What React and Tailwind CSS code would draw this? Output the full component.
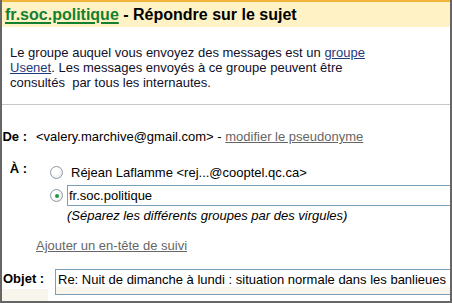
import React from 'react';

function Radio({ checked }) {
  return (
    <span className="w-[13px] h-[13px] shrink-0 rounded-full border border-[#8d99a4] bg-[radial-gradient(circle_at_35%_35%,#ffffff_30%,#dfe3e6_100%)] flex items-center justify-center">
      {checked && <span className="w-[4px] h-[4px] rounded-full bg-[#1f9a3a]" />}
    </span>
  );
}

export default function App() {
  return (
    <div className="w-[452px] h-[303px] overflow-hidden bg-white border-l-2 border-r-2 border-b-2 border-[#666] flex flex-col font-['Liberation_Sans',Arial,sans-serif] text-[13px] text-black">
      {/* Title bar */}
      <div className="h-[27px] shrink-0 border-t-2 border-[#f2b63c] bg-[#fff3c6] pl-[3px] flex items-center">
        <h1 className="text-[16px] font-bold leading-[18px] whitespace-nowrap">
          <a href="#" className="text-[#138030] underline decoration-2 underline-offset-2">fr.soc.politique</a>
          {' - Répondre sur le sujet'}
        </h1>
      </div>

      {/* Notice */}
      <p className="mt-[18px] pl-[8px] w-[380px] leading-[15px] text-[#10102a]">
        Le groupe auquel vous envoyez des messages est un{' '}
        <a href="#" className="text-[#1d3a7c] underline">groupe Usenet</a>. Les messages envoyés à ce groupe peuvent être
        consultés{'\u00a0'} par tous les internautes.
      </p>

      <div className="mt-[14px] h-px shrink-0 bg-[#c8c8c8]" />

      {/* From */}
      <div className="mt-[24px] flex leading-[16px] whitespace-nowrap">
        <span className="w-[25px] text-right font-bold shrink-0">De :</span>
        <span className="ml-[9px]">
          {'<valery.marchive@gmail.com> - '}
          <a href="#" className="text-[#666] underline">modifier le pseudonyme</a>
        </span>
      </div>

      {/* To */}
      <div className="mt-[16px] flex whitespace-nowrap">
        <span className="w-[25px] text-right font-bold leading-[15px] shrink-0">À :</span>
        <div className="ml-[23px] pt-[4px] flex flex-col">
          <label className="flex items-center h-[15px]">
            <Radio />
            <span className="ml-[8px] leading-[15px]">Réjean Laflamme &lt;rej...@cooptel.qc.ca&gt;</span>
          </label>
          <label className="mt-[5px] flex items-center">
            <Radio checked />
            <span className="ml-[4px] w-[400px] h-[21px] shrink-0 border border-[#7a9fb8] bg-white pl-[1px] leading-[19px]">
              fr.soc.politique
            </span>
          </label>
          <span className="mt-[2px] pl-[17px] italic leading-[15px]">
            (Séparez les différents groupes par des virgules)
          </span>
        </div>
      </div>

      <a href="#" className="mt-[15px] ml-[34px] self-start text-[#666] underline leading-[15px] whitespace-nowrap">
        Ajouter un en-tête de suivi
      </a>

      {/* Subject */}
      <div className="mt-[16px] flex flex-1 whitespace-nowrap">
        <div className="w-[53px] shrink-0 flex flex-col">
          <span className="pl-[1px] pt-[2px] font-bold leading-[15px]">Objet :</span>
          <div className="mt-auto w-[46px] h-[12px] bg-[#f7f5ec]" />
        </div>
        <div className="w-[420px] h-[26px] shrink-0 border border-[#7a9fb8] flex flex-col">
          <span className="pl-[2px] pt-[2px] leading-[15px] bg-white">
            Re: Nuit de dimanche à lundi : situation normale dans les banlieues
          </span>
          <div className="flex-1 bg-[#f7f5ec]" />
        </div>
      </div>
    </div>
  );
}
